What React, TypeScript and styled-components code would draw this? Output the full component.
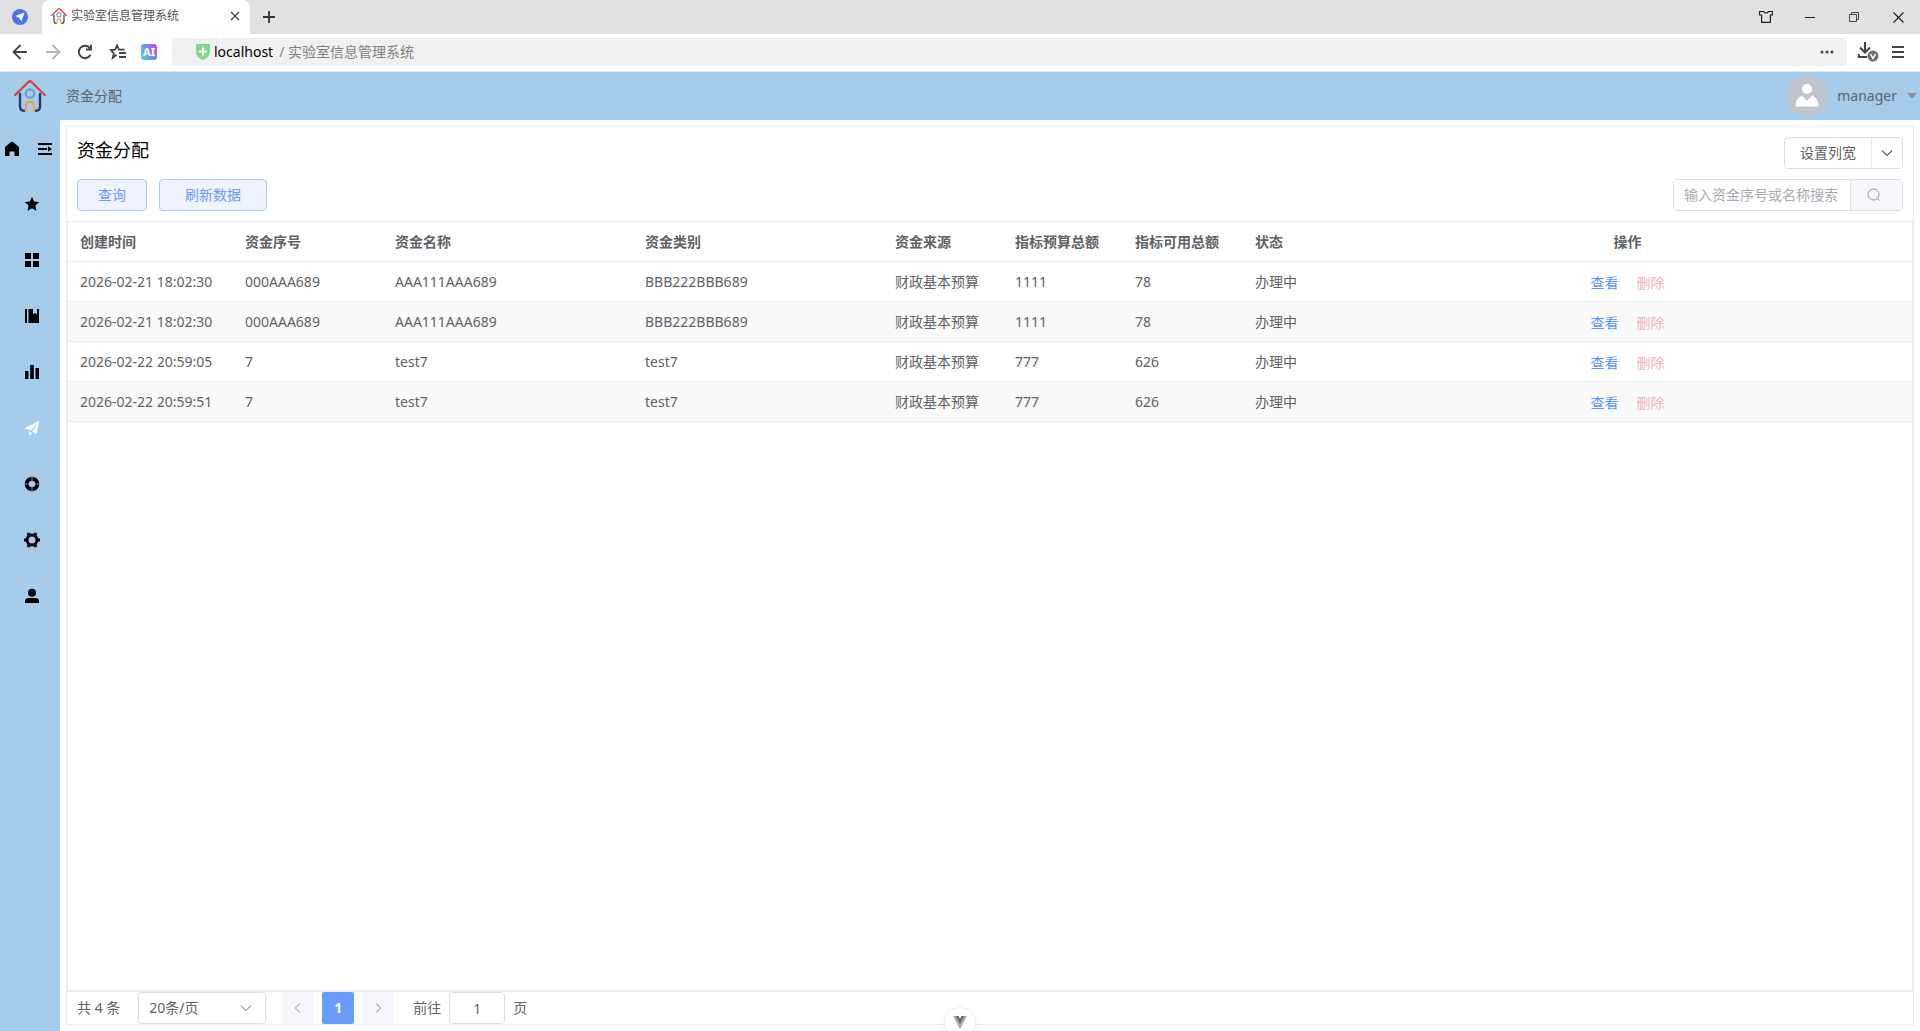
import React from 'react';
import styled, { createGlobalStyle } from 'styled-components';

const GlobalStyle = createGlobalStyle`
  * { box-sizing: border-box; }
  body {
    margin: 0;
    background: #fff;
    color: #606266;
    font: 14px/20px 'Noto Sans', 'Noto Sans CJK SC', sans-serif;
  }
  button, input, select { font: inherit; color: inherit; }
  svg { display: block; flex: none; }
`;

const Page = styled.div`
  display: flex;
  flex-direction: column;
  height: 100vh;
  overflow: hidden;
`;

const IconButton = styled.button<{ $w?: number }>`
  display: flex;
  align-items: center;
  justify-content: center;
  width: ${(p) => p.$w ?? 32}px;
  height: 32px;
  flex: none;
  padding: 0;
  border: 0;
  background: transparent;
`;

/* ---------- browser frame ---------- */

const TabStrip = styled.div`
  display: flex;
  align-items: center;
  flex: none;
  height: 34px;
  padding: 0 0 0 4px;
  background: #e1e1e1;
`;

const BrowserTab = styled.div`
  display: flex;
  align-items: center;
  gap: 4px;
  width: 208px;
  height: 34px;
  margin-left: 6px;
  padding: 0 0 2px 9px;
  border-radius: 8px 8px 0 0;
  background: #fff;
  font-size: 12px;
  color: #555;
`;

const TabTitle = styled.span`
  flex: 1;
`;

const WindowControls = styled.div`
  display: flex;
  gap: 12px;
  margin-left: auto;
  padding-right: 6px;
`;

const Toolbar = styled.div`
  display: flex;
  align-items: center;
  flex: none;
  height: 38px;
  padding: 0 8px 2px 4px;
  border-bottom: 1px solid #e4e4e4;
  background: #fff;
`;

const AddressBar = styled.div`
  display: flex;
  align-items: center;
  flex: 1;
  gap: 4px;
  height: 28px;
  margin: 0 4px 0 8px;
  padding: 0 4px 0 24px;
  border-radius: 4px;
  background: #f1f1f1;
`;

const Host = styled.span`
  color: #000;
`;

const PathText = styled.span`
  flex: 1;
  padding-left: 2px;
  color: #808080;
`;

/* ---------- application ---------- */

const AppHeader = styled.header`
  display: flex;
  align-items: center;
  flex: none;
  height: 48px;
  padding: 0 3px 0 14px;
  background: #a5cceb;
`;

const Crumb = styled.span`
  flex: 1;
  padding-left: 20px;
`;

const UserMenu = styled.button`
  display: flex;
  align-items: center;
  gap: 10px;
  padding: 0;
  border: 0;
  background: none;
`;

const Avatar = styled.span`
  display: flex;
  align-items: center;
  justify-content: center;
  width: 40px;
  height: 40px;
  border-radius: 50%;
  background: #c0c4cc;
`;

const Body = styled.div`
  display: flex;
  flex: 1;
  min-height: 0;
`;

const Sidebar = styled.nav`
  width: 60px;
  flex: none;
  background: #a5cceb;
`;

const SideTop = styled.div`
  display: flex;
  align-items: center;
  justify-content: space-between;
  height: 56px;
  padding: 2px 7px 0 4px;
`;

const SideButton = styled.button`
  padding: 0;
  border: 0;
  background: none;
  color: #000;
`;

const SideItem = styled.a<{ $active?: boolean }>`
  display: flex;
  align-items: center;
  height: 56px;
  padding-left: 24px;
  color: ${(p) => (p.$active ? '#fff' : '#000')};
`;

const Main = styled.main`
  display: flex;
  flex: 1;
  min-width: 0;
  padding: 6px;
`;

const Panel = styled.section`
  display: flex;
  flex: 1;
  flex-direction: column;
  min-width: 0;
  border: 1px solid #ebebf2;
`;

const PanelHead = styled.div`
  display: flex;
  flex-direction: column;
  gap: 10px;
  padding: 10px;
`;

const HeadRow = styled.div`
  display: flex;
  justify-content: space-between;
  height: 32px;
`;

const Title = styled.h1`
  margin: 0;
  font-size: 18px;
  font-weight: 400;
  line-height: 26px;
  color: #000;
`;

const Group = styled.div<{ $gap?: number }>`
  display: flex;
  gap: ${(p) => p.$gap ?? 0}px;
`;

const PrimaryButton = styled.button<{ $pad?: number }>`
  height: 32px;
  padding: 0 ${(p) => p.$pad ?? 20}px;
  border: 1px solid #abcbfb;
  border-radius: 4px;
  background: #edf4fe;
  color: #6a9df8;
`;

const SplitButton = styled.div`
  display: flex;
  border: 1px solid #dcdfe6;
  border-radius: 4px;
`;

const SplitMain = styled.button`
  padding: 0 15px;
  border: 0;
  background: none;
`;

const SplitArrow = styled.button`
  display: flex;
  align-items: center;
  justify-content: center;
  width: 31px;
  padding: 0;
  border: 0;
  border-left: 1px solid #e8eaef;
  background: none;
`;

const SearchBox = styled.form`
  display: flex;
  width: 230px;
  border: 1px solid #dcdfe6;
  border-radius: 4px;
  overflow: hidden;
`;

const SearchInput = styled.input`
  flex: 1;
  min-width: 0;
  padding: 0 0 0 10px;
  border: 0;
  outline: 0;
  &::placeholder { color: #a8abb2; opacity: 1; }
`;

const SearchButton = styled.button`
  display: flex;
  align-items: center;
  width: 52px;
  padding: 0 0 0 16px;
  border: 0;
  border-left: 1px solid #dcdfe6;
  background: #f5f7fa;
  color: #909399;
`;

const TableArea = styled.div`
  flex: 1;
  min-height: 0;
  border: solid #ebebf2;
  border-width: 1px 1px 2px;
`;

const DataTable = styled.table`
  width: 100%;
  table-layout: fixed;
  border-collapse: separate;
  border-spacing: 0;
`;

const Col = styled.col<{ $w?: number }>`
  width: ${(p) => (p.$w ? `${p.$w}px` : 'auto')};
`;

const HeadCell = styled.th<{ $center?: boolean }>`
  height: 40px;
  padding: 0 12px;
  border-bottom: 1px solid #ebeef2;
  font-weight: 700;
  text-align: ${(p) => (p.$center ? 'center' : 'left')};
  white-space: nowrap;
`;

const Cell = styled.td<{ $center?: boolean }>`
  height: 40px;
  padding: 0 12px;
  border-bottom: 1px solid #ebeef2;
  text-align: ${(p) => (p.$center ? 'center' : 'left')};
  white-space: nowrap;
`;

const Row = styled.tr`
  &:nth-child(even) { background: #fafafa; }
`;

const RowActions = styled.div`
  display: flex;
  justify-content: center;
  gap: 18px;
  padding-top: 2px;
`;

const TextButton = styled.button<{ $danger?: boolean }>`
  padding: 0;
  border: 0;
  background: none;
  color: ${(p) => (p.$danger ? '#f0b4b4' : '#5b95fa')};
`;

const Pager = styled.div`
  display: flex;
  align-items: center;
  flex: none;
  height: 32px;
  padding-left: 10px;
`;

const SizeSelect = styled.label`
  display: flex;
  align-items: center;
  width: 128px;
  height: 32px;
  margin: 0 16px 0 18px;
  padding-right: 12px;
  border: 1px solid #dcdfe6;
  border-radius: 4px;
  color: #a8abb2;
`;

const Select = styled.select`
  flex: 1;
  min-width: 0;
  height: 30px;
  padding: 0 0 0 10px;
  border: 0;
  outline: 0;
  appearance: none;
  background: none;
  color: #606266;
`;

const PageButton = styled.button<{ $current?: boolean }>`
  display: flex;
  align-items: center;
  justify-content: center;
  width: 32px;
  height: 32px;
  padding: 0;
  border: 0;
  border-radius: 2px;
  background: ${(p) => (p.$current ? '#6a9df8' : '#f5f7fa')};
  color: ${(p) => (p.$current ? '#fff' : '#a8abb2')};
  font-weight: 700;
`;

const Jump = styled.label`
  display: flex;
  align-items: center;
  gap: 8px;
  margin-left: 19px;
`;

const JumpInput = styled.input`
  width: 56px;
  height: 32px;
  padding: 0;
  border: 1px solid #dcdfe6;
  border-radius: 4px;
  text-align: center;
`;

const DevBadge = styled.button`
  position: fixed;
  bottom: -8px;
  left: 50%;
  display: flex;
  justify-content: center;
  width: 32px;
  height: 32px;
  margin-left: -16px;
  padding: 8px 0 0;
  border: 1px solid #eeeeee;
  border-radius: 50%;
  background: #fff;
  box-shadow: 0 0 8px #0000000d;
`;

/* ---------- drawings ---------- */

const HouseLogo = ({ size }: { size: number }) => (
  <svg width={size} height={size} viewBox="0 0 32 32" fill="none" strokeLinecap="round" strokeLinejoin="round">
    <path d="M6 14v12.500q0 4 4 4.300M26 14v12.500q0 4-4 4.300" stroke="#2f3576" strokeWidth="2.400" />
    <path d="M1.200 15 14.500 2q1.500-1.400 3 0L30.800 15" stroke="#d8403a" strokeWidth="2.300" />
    <circle cx="16" cy="13.500" r="4.200" stroke="#6f9bd6" strokeWidth="2.200" />
    <path d="M12 30.800v-5q0-4 4-4t4 4v5" stroke="#eda23f" strokeWidth="2.200" />
  </svg>
);

const Chevron = ({ d, size = 14 }: { d: string; size?: number }) => (
  <svg width={size} height={size} viewBox="0 0 14 14" fill="none" stroke="currentColor" strokeWidth="1.200">
    <path d={d} />
  </svg>
);
const DOWN = 'M2 4.500 7 9.500l5-5';

const Glyph = ({ children }: { children: React.ReactNode }) => (
  <svg width="16" height="16" viewBox="0 0 16 16" fill="currentColor">
    {children}
  </svg>
);

const menu: { name: string; active?: boolean; icon: React.ReactNode }[] = [
  { name: '收藏', icon: <path d="m8 .8 2.100 4.800 5.100.5-3.800 3.500 1.100 5.200L8 12.200l-4.500 2.600 1.100-5.200L.8 6.100l5.100-.5z" /> },
  { name: '应用', icon: <path d="M1 1h6v6H1zM9 1h6v6H9zM1 9h6v6H1zM9 9h6v6H9z" /> },
  { name: '台账', icon: <path d="M1 1h2v14H1zM4.500 1H9v5.500l2-1.500 2 1.500V1h2v14H4.500z" /> },
  { name: '统计', icon: <path d="M1 7h3.500v8H1zM6.200 1h3.600v14H6.200zM11.500 4H15v11h-3.500z" /> },
  { name: '资金分配', active: true, icon: <path d="M15.300.8 12.500 14 8.300 11.600 13.500 3.500 6.500 10.600.7 8.200zM5 11.600l3 1.400-2.600 3z" /> },
  {
    name: '帮助',
    icon: (
      <>
        <circle cx="8" cy="8" r="5.300" fill="none" stroke="currentColor" strokeWidth="4" />
        <path d="M8 .5v5M8 10.500v5M.5 8h5M10.500 8h5" stroke="#8a8f94" strokeWidth="1" />
      </>
    ),
  },
  {
    name: '设置',
    icon: (
      <>
        <circle cx="8" cy="8" r="5" fill="none" stroke="currentColor" strokeWidth="3" />
        <path d="M0 8h3M13 8h3M4 1l1.500 2.700M12 1l-1.500 2.700M4 15l1.500-2.700M12 15l-1.500-2.700" stroke="currentColor" strokeWidth="3" />
      </>
    ),
  },
  {
    name: '用户',
    icon: (
      <>
        <circle cx="8" cy="4.800" r="4" />
        <path d="M1 15v-1.500Q1 10 4.500 10h7q3.500 0 3.500 3.500V15z" />
      </>
    ),
  },
];

/* ---------- data ---------- */

const columns = [
  { label: '创建时间', width: 165 },
  { label: '资金序号', width: 150 },
  { label: '资金名称', width: 250 },
  { label: '资金类别', width: 250 },
  { label: '资金来源', width: 120 },
  { label: '指标预算总额', width: 120 },
  { label: '指标可用总额', width: 120 },
  { label: '状态', width: 100 },
];

const rows = [
  ['2026-02-21 18:02:30', '000AAA689', 'AAA111AAA689', 'BBB222BBB689', '财政基本预算', '1111', '78', '办理中'],
  ['2026-02-21 18:02:30', '000AAA689', 'AAA111AAA689', 'BBB222BBB689', '财政基本预算', '1111', '78', '办理中'],
  ['2026-02-22 20:59:05', '7', 'test7', 'test7', '财政基本预算', '777', '626', '办理中'],
  ['2026-02-22 20:59:51', '7', 'test7', 'test7', '财政基本预算', '777', '626', '办理中'],
];

function BrowserChrome() {
  return (
    <>
      <TabStrip>
        <IconButton aria-label="浏览器">
          <svg width="16" height="16" viewBox="0 0 16 16">
            <circle cx="8" cy="8" r="8" fill="#4a74e8" />
            <path d="M12.500 3.500 9.300 12.500 7.300 9 3.500 7z" fill="#fff" />
          </svg>
        </IconButton>
        <BrowserTab>
          <HouseLogo size={16} />
          <TabTitle>实验室信息管理系统</TabTitle>
          <IconButton $w={30} aria-label="关闭标签页">
            <svg width="10" height="10" viewBox="0 0 10 10" stroke="#444" strokeWidth="1.300">
              <path d="m1 1 8 8M9 1 1 9" />
            </svg>
          </IconButton>
        </BrowserTab>
        <IconButton $w={38} aria-label="新标签页">
          <svg width="12" height="12" viewBox="0 0 12 12" stroke="#333" strokeWidth="1.800">
            <path d="M6 0v12M0 6h12" />
          </svg>
        </IconButton>
        <WindowControls>
          <IconButton aria-label="皮肤">
            <svg width="14" height="14" viewBox="0 0 14 14" fill="none" stroke="#222" strokeWidth="1.200">
              <path d="M.6 1.500h4q.4 1.500 2.400 1.500t2.400-1.500h4V5h-2v7.400H2.600V5h-2z" />
            </svg>
          </IconButton>
          <IconButton aria-label="最小化">
            <svg width="10" height="10" viewBox="0 0 10 10" stroke="#222"><path d="M0 5.500h10" /></svg>
          </IconButton>
          <IconButton aria-label="还原">
            <svg width="10" height="10" viewBox="0 0 10 10" fill="none" stroke="#444">
              <path d="M.5 2.500h7v7h-7zM2.500 2.500v-2h7v7h-2" />
            </svg>
          </IconButton>
          <IconButton aria-label="关闭">
            <svg width="11" height="11" viewBox="0 0 11 11" stroke="#222" strokeWidth="1.200"><path d="m.5.5 10 10M10.500.5l-10 10" /></svg>
          </IconButton>
        </WindowControls>
      </TabStrip>
      <Toolbar>
        <IconButton aria-label="后退">
          <svg width="16" height="16" viewBox="0 0 16 16" fill="none" stroke="#444" strokeWidth="1.800"><path d="M15 8H2M8.500 1 1.500 8l7 7" /></svg>
        </IconButton>
        <IconButton $w={33} aria-label="前进">
          <svg width="16" height="16" viewBox="0 0 16 16" fill="none" stroke="#b5b5b5" strokeWidth="1.800"><path d="M1 8h13M7.500 1l7 7-7 7" /></svg>
        </IconButton>
        <IconButton aria-label="刷新">
          <svg width="16" height="16" viewBox="0 0 16 16" fill="none" stroke="#444" strokeWidth="1.900"><path d="M13.500 10.800A6.200 6.200 0 1 1 13 4.300M14 .8v4.700H9" /></svg>
        </IconButton>
        <IconButton $w={33} aria-label="收藏夹">
          <svg width="18" height="16" viewBox="0 0 18 16" fill="none" stroke="#444" strokeWidth="1.800">
            <path d="M7.500 10.800 3.800 13.800 4.800 9.300 1.800 6l4.200-.4L8 1.500l2 4.100h5.500M10 9h7M10 13h7" />
          </svg>
        </IconButton>
        <IconButton $w={30} aria-label="AI 助手">
          <svg width="16" height="16" viewBox="0 0 16 16">
            <defs>
              <linearGradient id="ai" x1="0" y1=".7" x2="1" y2=".2">
                <stop offset="0" stopColor="#5bcbe6" />
                <stop offset=".5" stopColor="#6a8df0" />
                <stop offset="1" stopColor="#e24bc4" />
              </linearGradient>
            </defs>
            <rect width="16" height="16" rx="3" fill="url(#ai)" />
            <text x="8" y="12" textAnchor="middle" fontFamily="Noto Sans" fontSize="11" fontWeight="700" fill="#fff">AI</text>
          </svg>
        </IconButton>
        <AddressBar>
          <svg width="14" height="16" viewBox="0 0 14 16">
            <path d="M1 0h12q1 0 1 1v7q0 5-7 8-7-3-7-8V1q0-1 1-1z" fill="#7fd88b" />
            <path d="M7 3.500v8M3 7.500h8" stroke="#fff" strokeWidth="2" />
          </svg>
          <Host>localhost</Host>
          <PathText>/ 实验室信息管理系统</PathText>
          <IconButton aria-label="更多">
            <svg width="14" height="4" viewBox="0 0 14 4" fill="#444"><circle cx="2" cy="2" r="1.500" /><circle cx="7" cy="2" r="1.500" /><circle cx="12" cy="2" r="1.500" /></svg>
          </IconButton>
        </AddressBar>
        <IconButton $w={33} aria-label="下载">
          <svg width="22" height="20" viewBox="0 0 22 20" fill="none" stroke="#444" strokeWidth="2">
            <path d="M8 0v10M3 5.500l5 5 5-5M1.800 12v3H10" />
            <circle cx="16" cy="14" r="5.500" fill="#707070" stroke="none" />
            <path d="m13.500 12 2.500 4.500 2.500-4.500" stroke="#fff" strokeWidth="1.500" />
          </svg>
        </IconButton>
        <IconButton $w={28} aria-label="菜单">
          <svg width="12" height="12" viewBox="0 0 12 12" stroke="#444" strokeWidth="2"><path d="M0 1h12M0 6h12M0 11h12" /></svg>
        </IconButton>
      </Toolbar>
    </>
  );
}

function FundTable() {
  return (
    <DataTable>
      <colgroup>
        {columns.map((c) => <Col key={c.label} $w={c.width} />)}
        <Col />
      </colgroup>
      <thead>
        <tr>
          {columns.map((c) => <HeadCell key={c.label}>{c.label}</HeadCell>)}
          <HeadCell $center>操作</HeadCell>
        </tr>
      </thead>
      <tbody>
        {rows.map((row, i) => (
          <Row key={i}>
            {row.map((value, j) => <Cell key={j}>{value}</Cell>)}
            <Cell $center>
              <RowActions>
                <TextButton>查看</TextButton>
                <TextButton $danger disabled>删除</TextButton>
              </RowActions>
            </Cell>
          </Row>
        ))}
      </tbody>
    </DataTable>
  );
}

export default function App() {
  return (
    <Page>
      <GlobalStyle />
      <BrowserChrome />
      <AppHeader>
        <HouseLogo size={32} />
        <Crumb>资金分配</Crumb>
        <UserMenu>
          <Avatar>
            <svg width="24" height="24" viewBox="0 0 24 24" fill="#fff">
              <circle cx="12" cy="5" r="5" />
              <path d="M.5 22.500q0-8 6.500-11l5 5.500 5-5.500q6.500 3 6.500 11z" />
            </svg>
          </Avatar>
          manager
          <svg width="10" height="6" viewBox="0 0 10 6" fill="#909399"><path d="M0 0h10L5 6z" /></svg>
        </UserMenu>
      </AppHeader>
      <Body>
        <Sidebar>
          <SideTop>
            <SideButton aria-label="首页">
              <Glyph><path d="M8 .8Q9 .8 15 6v9h-4.500v-4.500h-5V15H1V6Q7 .8 8 .8z" /></Glyph>
            </SideButton>
            <SideButton aria-label="展开菜单">
              <Glyph><path d="M1 2h14v2H1zM1 12h14v2H1zM1 7h9v2H1zM11 5.200 15 8l-4 2.800z" /></Glyph>
            </SideButton>
          </SideTop>
          {menu.map((m) => (
            <SideItem key={m.name} href="#" aria-label={m.name} $active={m.active}>
              <Glyph>{m.icon}</Glyph>
            </SideItem>
          ))}
        </Sidebar>
        <Main>
          <Panel>
            <PanelHead>
              <HeadRow>
                <Title>资金分配</Title>
                <SplitButton>
                  <SplitMain>设置列宽</SplitMain>
                  <SplitArrow aria-label="更多选项"><Chevron d={DOWN} /></SplitArrow>
                </SplitButton>
              </HeadRow>
              <HeadRow>
                <Group $gap={12}>
                  <PrimaryButton>查询</PrimaryButton>
                  <PrimaryButton $pad={25}>刷新数据</PrimaryButton>
                </Group>
                <SearchBox>
                  <SearchInput aria-label="搜索" placeholder="输入资金序号或名称搜索" />
                  <SearchButton type="button" aria-label="执行搜索">
                    <svg width="14" height="14" viewBox="0 0 14 14" fill="none" stroke="currentColor"><circle cx="6.500" cy="6.500" r="5.500" /><path d="m10.500 10.500 2 2" /></svg>
                  </SearchButton>
                </SearchBox>
              </HeadRow>
            </PanelHead>
            <TableArea>
              <FundTable />
            </TableArea>
            <Pager>
              <span>共 4 条</span>
              <SizeSelect>
                <Select aria-label="每页条数" defaultValue="20">
                  <option value="20">20条/页</option>
                  <option value="50">50条/页</option>
                </Select>
                <Chevron d={DOWN} />
              </SizeSelect>
              <Group $gap={8}>
                <PageButton aria-label="上一页" disabled><Chevron size={12} d="M9 2 4 7l5 5" /></PageButton>
                <PageButton $current>1</PageButton>
                <PageButton aria-label="下一页" disabled><Chevron size={12} d="m5 2 5 5-5 5" /></PageButton>
              </Group>
              <Jump>
                前往
                <JumpInput defaultValue="1" />
                页
              </Jump>
            </Pager>
          </Panel>
        </Main>
      </Body>
      <DevBadge aria-label="开发工具">
        <svg width="14" height="13" viewBox="0 0 14 13">
          <path d="M0 0h14L7 13z" fill="#aaa" />
          <path d="M2.800 0h8.400L7 8z" fill="#666" />
          <path d="M5.500 0h3L7 3z" fill="#fff" />
        </svg>
      </DevBadge>
    </Page>
  );
}
